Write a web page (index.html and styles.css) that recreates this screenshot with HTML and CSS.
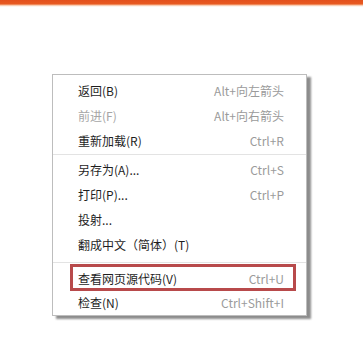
FILE: index.html
```html
<!DOCTYPE html>
<html>
<head>
<meta charset="utf-8">
<link rel="stylesheet" href="styles.css">
</head>
<body>
<div class="topbar"></div>
<div class="stage">
  <div class="menu">
    <div class="group first">
      <div class="item"><span class="label">返回(B)</span><span class="key">Alt+向左箭头</span></div>
      <div class="item disabled"><span class="label">前进(F)</span><span class="key">Alt+向右箭头</span></div>
      <div class="item"><span class="label">重新加载(R)</span><span class="key">Ctrl+R</span></div>
    </div>
    <div class="sep sep1"></div>
    <div class="group">
      <div class="item"><span class="label">另存为(A)...</span><span class="key">Ctrl+S</span></div>
      <div class="item"><span class="label">打印(P)...</span><span class="key">Ctrl+P</span></div>
      <div class="item"><span class="label">投射...</span></div>
      <div class="item"><span class="label">翻成中文（简体）(T)</span></div>
    </div>
    <div class="sep sep2"></div>
    <div class="group last">
      <div class="item short highlight"><span class="label">查看网页源代码(V)</span><span class="key">Ctrl+U</span></div>
      <div class="item short"><span class="label">检查(N)</span><span class="key">Ctrl+Shift+I</span></div>
    </div>
  </div>
</div>
</body>
</html>
```
FILE: styles.css
```css
html, body {
  margin: 0;
  padding: 0;
  background: #ffffff;
}
body {
  width: 363px;
  height: 350px;
  overflow: hidden;
  font-family: "Noto Sans CJK SC", "Noto Sans", sans-serif;
  font-size: 12px;
}
.topbar {
  height: 7px;
  background: linear-gradient(to bottom, #e4501c 0, #e85a22 4px, #f6b38c 5px, #fde9dc 6px, #ffffff 7px);
}
.stage {
  padding-top: 67px;
  padding-left: 52px;
}
.menu {
  width: 253px;
  height: 240px;
  border: 1px solid #bdbdbd;
  background: #ffffff;
  box-shadow: 4px 3px 2px rgba(0, 0, 0, 0.45);
  display: flex;
  flex-direction: column;
}
.group.first {
  padding-top: 3px;
}
.item {
  height: 25px;
  display: flex;
  align-items: center;
  justify-content: space-between;
  padding: 0 22px 0 25px;
  color: #1e1e1e;
  line-height: 1;
}
.item.short {
  height: 24px;
}
.item.disabled .label {
  color: #a6a6a6;
}
.key {
  color: #9b9b9b;
}
.sep {
  height: 1px;
  background: #e3e3e3;
  margin: 1px 0 3px;
}
.sep.sep2 {
  margin: 4px 0 5px;
}
.highlight {
  position: relative;
}
.highlight::after {
  content: "";
  position: absolute;
  left: 17px;
  right: 10px;
  top: -3px;
  bottom: 0px;
  border: 3px solid #b84a4b;
  box-sizing: border-box;
}
```
